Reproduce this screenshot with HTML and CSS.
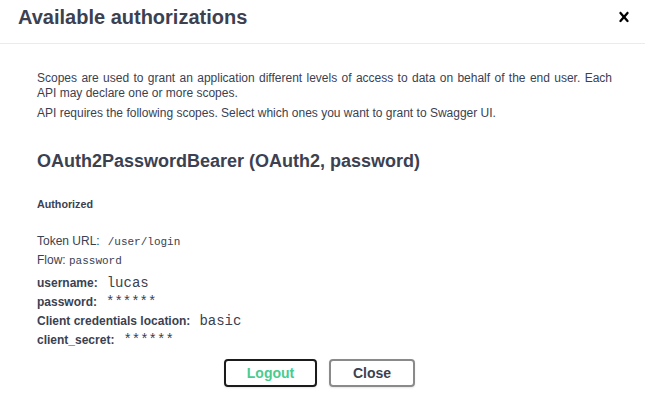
FILE: index.html
```html
<!DOCTYPE html>
<html>
<head>
<meta charset="utf-8">
<link rel="stylesheet" href="styles.css">
</head>
<body>
<div class="dialog">
  <div class="modal-header">
    <h3 class="modal-title">Available authorizations</h3>
    <button class="close-modal" aria-label="Close">
      <svg width="20" height="20" viewBox="0 0 20 20"><path d="M14.348 14.849c-.469.469-1.229.469-1.697 0L10 11.819l-2.651 3.029c-.469.469-1.229.469-1.697 0-.469-.469-.469-1.229 0-1.697l2.758-3.15-2.759-3.152c-.469-.469-.469-1.228 0-1.697.469-.469 1.228-.469 1.697 0L10 8.183l2.651-3.031c.469-.469 1.228-.469 1.697 0 .469.469.469 1.229 0 1.697l-2.758 3.152 2.758 3.15c.469.469.469 1.229 0 1.698z" fill="#000"/></svg>
    </button>
  </div>
  <div class="modal-content">
    <p class="desc"><span class="justified-line">Scopes are used to grant an application different levels of access to data on behalf of the end user. Each</span>API may declare one or more scopes.</p>
    <p class="desc">API requires the following scopes. Select which ones you want to grant to Swagger UI.</p>
    <h4 class="scheme-title">OAuth2PasswordBearer (OAuth2, password)</h4>
    <h6 class="auth-state">Authorized</h6>
    <div class="info-row">Token URL:<code class="small-code">/user/login</code></div>
    <div class="info-row">Flow: <code class="small-code tight">password</code></div>
    <div class="fields">
      <div class="info-row"><label class="field-label">username:</label><code class="value">lucas</code></div>
      <div class="info-row"><label class="field-label">password:</label><code class="value">******</code></div>
      <div class="info-row"><label class="plain-label">Client credentials location:</label><code class="value">basic</code></div>
      <div class="info-row"><label class="field-label">client_secret:</label><code class="value">******</code></div>
    </div>
    <div class="btn-wrapper">
      <button class="btn btn-logout">Logout</button>
      <button class="btn btn-close">Close</button>
    </div>
  </div>
</div>
</body>
</html>
```
FILE: styles.css
```css
html, body {
  margin: 0;
  padding: 0;
  background: #fff;
}
body {
  width: 645px;
  height: 410px;
  overflow: hidden;
  font-family: "Liberation Sans", Arial, sans-serif;
  color: #3b4151;
}
.dialog {
  display: flex;
  flex-direction: column;
}
.modal-header {
  display: flex;
  align-items: flex-start;
  height: 43px;
  border-bottom: 1px solid #ebebeb;
}
.modal-title {
  flex: 1;
  margin: 6px 0 0;
  padding-left: 18px;
  font-size: 20px;
  line-height: 23px;
  font-weight: 700;
  color: #3b4151;
}
.close-modal {
  margin: 7px 11px 0 0;
  padding: 0;
  border: 0;
  background: none;
  width: 20px;
  height: 20px;
  display: flex;
}
.modal-content {
  padding: 27px 33px 0 37px;
  display: flex;
  flex-direction: column;
}
.desc {
  margin: 0 0 5px;
  font-size: 12px;
  line-height: 15px;
  color: #3b4151;
}
.justified-line {
  display: block;
  text-align: justify;
  text-align-last: justify;
  white-space: nowrap;
}
.scheme-title {
  margin: 25px 0 0;
  font-size: 18px;
  line-height: 21px;
  font-weight: 700;
  color: #3b4151;
}
.auth-state {
  margin: 26px 0 0;
  font-size: 10.72px;
  line-height: 13px;
  font-weight: 700;
  color: #3b4151;
}
.auth-state + .info-row {
  margin-top: 21px;
}
.info-row {
  font-size: 12px;
  line-height: 19px;
  height: 19px;
  color: #3b4151;
  white-space: nowrap;
}
.small-code {
  font-family: "Liberation Mono", monospace;
  font-size: 11px;
  margin-left: 8px;
}
.small-code.tight {
  margin-left: 0;
}
.fields {
  margin-top: 4px;
}
.field-label,
.plain-label {
  font-weight: 700;
}
.value {
  font-family: "Liberation Mono", monospace;
  font-size: 14px;
  margin-left: 9px;
  color: #3b4151;
}
.btn-wrapper {
  display: flex;
  justify-content: center;
  gap: 12px;
  margin: 9px 0 0 -37px;
  padding-right: 6px;
  width: 645px;
  box-sizing: border-box;
}
.btn {
  height: 28px;
  box-sizing: border-box;
  padding: 0;
  border-radius: 4px;
  background: transparent;
  font-family: "Liberation Sans", Arial, sans-serif;
  font-size: 14px;
  font-weight: 700;
  line-height: 24px;
  box-shadow: 0 1px 2px rgba(0,0,0,.1);
  cursor: pointer;
}
.btn-logout {
  width: 93px;
  border: 2px solid #1b1b1b;
  color: #49cc90;
}
.btn-close {
  width: 86px;
  border: 2px solid #8a8a8a;
  color: #3b4151;
}
```
